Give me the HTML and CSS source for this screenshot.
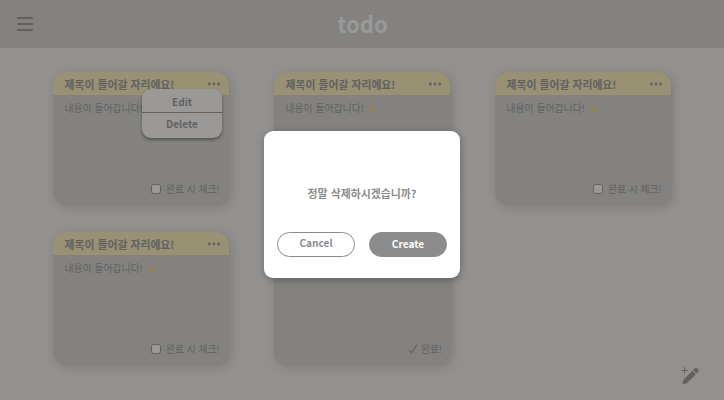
FILE: index.html
```html
<!DOCTYPE html>
<html lang="ko">
<head>
<meta charset="utf-8">
<title>todo</title>
<link rel="stylesheet" href="styles.css">
</head>
<body>
<header class="topbar">
  <svg class="burger" width="16" height="15" viewBox="0 0 16 15"><path d="M.8 1h14.4M.8 7h14.4M.8 13h14.4"/></svg>
  <h1 class="logo">todo</h1>
</header>
<main class="board">
  <article class="card">
    <div class="card-head"><h2>제목이 들어갈 자리에요!</h2><svg class="dots" width="12" height="4" viewBox="0 0 12 4"><circle cx="1.4" cy="2" r="1.4"/><circle cx="6" cy="2" r="1.4"/><circle cx="10.6" cy="2" r="1.4"/></svg></div>
    <p class="card-text">내용이 들어갑니다!</p>
    <label class="check"><span class="box"></span>완료 시 체크!</label>
    <div class="menu"><span class="menu-item">Edit</span><span class="menu-item">Delete</span></div>
  </article>
  <article class="card">
    <div class="card-head"><h2>제목이 들어갈 자리에요!</h2><svg class="dots" width="12" height="4" viewBox="0 0 12 4"><circle cx="1.4" cy="2" r="1.4"/><circle cx="6" cy="2" r="1.4"/><circle cx="10.6" cy="2" r="1.4"/></svg></div>
    <p class="card-text">내용이 들어갑니다!<svg class="spark" width="9" height="9" viewBox="0 0 9 9"><path d="M5.7 1.3 6.5 3.6 8.7 4.5 6.5 5.4 5.7 7.7 4.9 5.4 2.8 4.5 4.9 3.6ZM1.5.3 1.9 1.6 3 2 1.9 2.4 1.5 3.6 1.1 2.4 0 2 1.1 1.6ZM2.7 5.9 3.1 7.1 4.2 7.5 3.1 7.9 2.7 9 2.3 7.9 1.2 7.5 2.3 7.1Z"/></svg></p>
  </article>
  <article class="card">
    <div class="card-head"><h2>제목이 들어갈 자리에요!</h2><svg class="dots" width="12" height="4" viewBox="0 0 12 4"><circle cx="1.4" cy="2" r="1.4"/><circle cx="6" cy="2" r="1.4"/><circle cx="10.6" cy="2" r="1.4"/></svg></div>
    <p class="card-text">내용이 들어갑니다!<svg class="spark" width="9" height="9" viewBox="0 0 9 9"><path d="M5.7 1.3 6.5 3.6 8.7 4.5 6.5 5.4 5.7 7.7 4.9 5.4 2.8 4.5 4.9 3.6ZM1.5.3 1.9 1.6 3 2 1.9 2.4 1.5 3.6 1.1 2.4 0 2 1.1 1.6ZM2.7 5.9 3.1 7.1 4.2 7.5 3.1 7.9 2.7 9 2.3 7.9 1.2 7.5 2.3 7.1Z"/></svg></p>
    <label class="check"><span class="box"></span>완료 시 체크!</label>
  </article>
  <article class="card">
    <div class="card-head"><h2>제목이 들어갈 자리에요!</h2><svg class="dots" width="12" height="4" viewBox="0 0 12 4"><circle cx="1.4" cy="2" r="1.4"/><circle cx="6" cy="2" r="1.4"/><circle cx="10.6" cy="2" r="1.4"/></svg></div>
    <p class="card-text">내용이 들어갑니다!<svg class="spark" width="9" height="9" viewBox="0 0 9 9"><path d="M5.7 1.3 6.5 3.6 8.7 4.5 6.5 5.4 5.7 7.7 4.9 5.4 2.8 4.5 4.9 3.6ZM1.5.3 1.9 1.6 3 2 1.9 2.4 1.5 3.6 1.1 2.4 0 2 1.1 1.6ZM2.7 5.9 3.1 7.1 4.2 7.5 3.1 7.9 2.7 9 2.3 7.9 1.2 7.5 2.3 7.1Z"/></svg></p>
    <label class="check"><span class="box"></span>완료 시 체크!</label>
  </article>
  <article class="card card-done">
    <div class="check"><svg class="tick" width="10" height="10" viewBox="0 0 10 10"><path d="M.8 5.8 3.4 8.8 9 .8"/></svg>완료!</div>
  </article>
</main>
<svg class="compose" width="20" height="20" viewBox="0 0 20 20"><path class="plus" d="M3.5 1.2v6.4M.3 4.5h6.4"/><path d="M2.3 13.9 11.4 4.8 14.9 8.2 5.7 17.2 1.3 18.4ZM12.2 4 13.6 2.6Q15 1.4 16.4 2.5L17.1 3.2Q18.3 4.6 17.1 6L15.7 7.4Z"/></svg>
<section class="modal">
  <p class="question">정말 삭제하시겠습니까?</p>
  <div class="actions"><button class="btn cancel">Cancel</button><button class="btn create">Create</button></div>
</section>
</body>
</html>
```
FILE: styles.css
```css
* { box-sizing: border-box; }
body {
  margin: 0;
  height: 400px;
  overflow: hidden;
  background: #92918f;
  color: #62615f;
  font-family: "Noto Sans CJK KR", "Noto Sans", sans-serif;
}
h1, h2, p { margin: 0; }
svg { display: block; }
.topbar {
  display: grid;
  grid-template-columns: 1fr auto 1fr;
  align-items: center;
  height: 48px;
  padding: 0 17px;
  background: #838280;
}
.burger { fill: none; stroke: #62615f; stroke-width: 1.8; stroke-linecap: round; }
.logo { color: #9a9998; font-size: 22px; line-height: 47px; padding: 0 0 1px 1px; font-weight: 700; }
.board {
  display: grid;
  grid-template-columns: repeat(3, 176px);
  grid-auto-rows: 133px;
  gap: 27px 45px;
  padding: 24px 53px;
}
.card {
  position: relative;
  display: flex;
  flex-direction: column;
  border-radius: 13px;
  background: #838280;
  box-shadow: 2px 2px 8px rgba(60, 58, 55, .25);
}
.card-head {
  display: flex;
  align-items: center;
  justify-content: space-between;
  height: 23px;
  padding: 0 9px 0 11.5px;
  border-radius: 13px 13px 0 0;
  background: #989174;
}
.card-head h2 { font-size: 10.85px; line-height: 23px; font-weight: 700; padding-top: 2px; }
.dots { fill: #62615f; }
.card-text {
  display: flex;
  align-items: center;
  gap: 4px;
  padding: 5px 11.5px;
  font-size: 9.85px;
  line-height: 16px;
}
.spark { fill: #9f8438; }
.check {
  display: flex;
  align-items: center;
  justify-content: flex-end;
  gap: 5px;
  margin-top: auto;
  padding: 0 9.5px 8px;
  font-size: 9.75px;
  line-height: 16px;
}
.box { width: 10px; height: 10px; border: 1px solid #62615f; border-radius: 2.5px; background: #9a9998; }
.card-done { grid-column: 2; }
.card-done .check { gap: 3px; padding-right: 8px; }
.tick { fill: none; stroke: #62615f; stroke-width: 1.1; }
.menu {
  position: absolute;
  left: 89px;
  top: 17px;
  width: 80px;
  height: 49px;
  border-radius: 9px;
  background: #9a9998;
  box-shadow: 0 2px 3px rgba(50, 48, 46, .55);
}
.menu-item { display: block; height: 25px; text-align: center; font-size: 10.1px; line-height: 22px; font-weight: 700; }
.menu-item:first-child { height: 24px; border-bottom: 1px solid #62615f; line-height: 26px; }
.compose { position: absolute; left: 681px; top: 366px; fill: #62615f; }
.plus { fill: none; stroke: #62615f; stroke-width: 1; }
.modal {
  position: absolute;
  left: 264px;
  top: 131px;
  display: flex;
  flex-direction: column;
  justify-content: space-between;
  width: 196px;
  height: 147px;
  padding: 53px 13px 21px;
  border-radius: 9px;
  background: #fff;
  color: #8c8c8c;
  box-shadow: 1px 2px 7px rgba(50, 48, 46, .4);
}
.question { text-align: center; font-size: 10.9px; line-height: 18px; font-weight: 700; }
.actions { display: flex; justify-content: space-between; }
.btn {
  width: 78px;
  height: 25px;
  padding: 0 0 3px;
  border: 1px solid #8c8c8c;
  border-radius: 13px;
  background: #fff;
  color: inherit;
  font: 700 10.1px/20px "Noto Sans CJK KR", sans-serif;
}
.create { padding-bottom: 1px; background: #8c8c8c; color: #fff; }
```
